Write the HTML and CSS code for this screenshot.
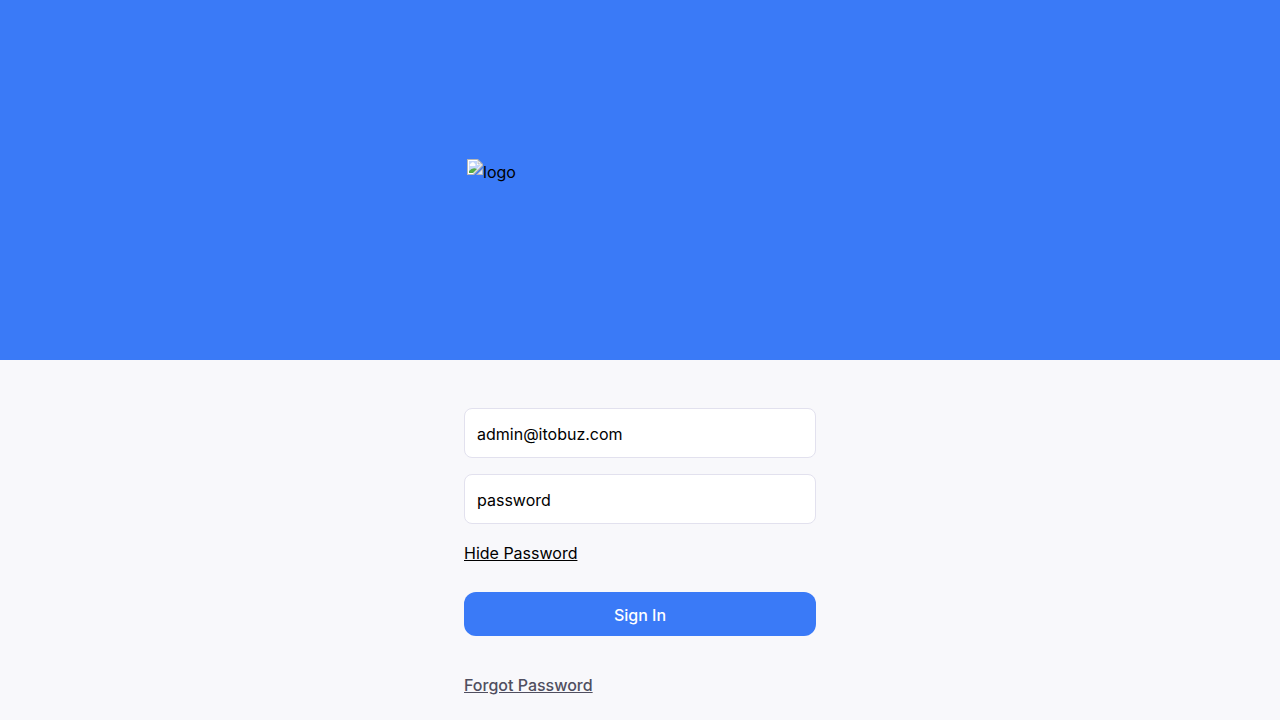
FILE: index.html
```html
<!DOCTYPE html>
<html lang="en">
<head>
<meta charset="utf-8">
<title>Sign In</title>
<link rel="stylesheet" href="styles.css">
</head>
<body>
<main class="page">
  <header class="hero">
    <div class="logo">
      <svg class="logo-icon" width="16" height="16" viewBox="0 0 16 16" aria-hidden="true">
        <path d="M0 0h11l5 5v2L7 16H0z" fill="#b5b5b5"/>
        <path d="M1 1h10v4h4v1L6 15H1z" fill="#fff"/>
        <path d="M2 2h8v4h4L6 14H2z" fill="#c2d5fa"/>
        <path d="M3 7a1.500 1.500 0 0 1 1-2.500a2 2 0 0 1 3.600 0A1.500 1.500 0 0 1 8 7z" fill="#fff"/>
        <path d="M2 14v-2q3.500-4 8-2L6 14z" fill="#56ac45"/>
        <path d="M11 1v4h4z" fill="#e8edf5" stroke="#a3a3a3" stroke-width=".6"/>
        <path d="M16 9v7H9z" fill="#b5b5b5"/>
        <path d="M15 11v4h-4z" fill="#d9e5fb"/>
      </svg>
      <span class="logo-text">logo</span>
    </div>
  </header>
  <form class="form">
    <input class="field" type="text" value="admin@itobuz.com" aria-label="Email">
    <input class="field" type="text" value="password" aria-label="Password">
    <button class="toggle" type="button">Hide Password</button>
    <button class="submit" type="button">Sign In</button>
    <a class="forgot" href="#">Forgot Password</a>
  </form>
</main>
</body>
</html>
```

FILE: styles.css
```css
* { box-sizing: border-box; }
body {
  margin: 0;
  background: #f8f8fb;
  color: #000;
  font: 16px/24px Inter, "Liberation Sans", sans-serif;
}
.page { min-height: 100vh; display: flex; flex-direction: column; }
.hero {
  height: 50vh;
  background: #3a7af7;
  display: flex;
  align-items: center;
  justify-content: center;
}
.logo {
  width: 346px;
  height: 42px;
  display: flex;
  align-items: flex-start;
}
.logo-text { padding-top: 1px; }
.form {
  width: 100%;
  max-width: 384px;
  margin: 0 auto;
  padding: 48px 16px 20px;
  display: flex;
  flex-direction: column;
  align-items: flex-start;
}
.field {
  width: 100%;
  height: 50px;
  margin: 0 0 16px;
  padding: 2px 12px 0;
  border: 1px solid #e2e1ee;
  border-radius: 8px;
  background: #fff;
  color: #000;
  font: inherit;
}
.toggle {
  margin: 1px 0 27px;
  padding: 0;
  border: 0;
  background: none;
  color: #000;
  font: inherit;
  text-decoration: underline;
}
.submit {
  width: 100%;
  height: 44px;
  margin: 0 0 37px;
  padding: 2px 12px 0;
  border: 0;
  border-radius: 12px;
  background: #3a7af7;
  color: #fff;
  font: inherit;
  font-weight: 500;
}
.forgot { color: #504f60; font-weight: 500; text-decoration: underline; }
```
